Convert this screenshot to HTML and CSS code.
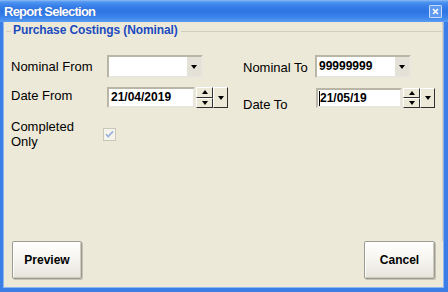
FILE: index.html
```html
<!DOCTYPE html>
<html>
<head>
<meta charset="utf-8">
<link rel="stylesheet" href="styles.css">
</head>
<body>
<div class="window">
  <div class="titlebar">
    <span class="title">Report Selection</span>
    <span class="close"><svg width="7" height="7" viewBox="0 0 7 7"><path d="M1 1 L6 6 M6 1 L1 6" stroke="#fff" stroke-width="1.6"/></svg></span>
  </div>
  <div class="frame">
    <div class="group">
      <div class="group-head">
        <span class="gline gline-left"></span>
        <span class="legend">Purchase Costings (Nominal)</span>
        <span class="gline gline-right"></span>
      </div>
      <div class="group-body">
        <div class="row row1">
          <div class="cell cell-left">
            <span class="label lbl-from">Nominal From</span>
            <div class="combo"><span class="combo-text"></span><span class="drop"><i class="tri-down"></i></span></div>
          </div>
          <div class="cell">
            <span class="label lbl-to nom-to">Nominal To</span>
            <div class="combo"><span class="combo-text">99999999</span><span class="drop"><i class="tri-down"></i></span></div>
          </div>
        </div>
        <div class="row row2">
          <div class="cell cell-left cell-top">
            <span class="label lbl-from date-from">Date From</span>
            <div class="datefield df-from"><span class="date-text">21/04/2019</span></div>
            <div class="spin spin-from"><span class="spin-btn"><i class="tri-up"></i></span><span class="spin-btn"><i class="tri-down"></i></span></div>
            <span class="dd dd-from"><i class="tri-down"></i></span>
          </div>
          <div class="cell cell-top">
            <span class="label lbl-to date-to">Date To</span>
            <div class="datefield df-to"><span class="caret"></span><span class="date-text">21/05/19</span></div>
            <div class="spin spin-to"><span class="spin-btn"><i class="tri-up"></i></span><span class="spin-btn"><i class="tri-down"></i></span></div>
            <span class="dd dd-to"><i class="tri-down"></i></span>
          </div>
        </div>
        <div class="row row3">
          <span class="label lbl-check">Completed<br>Only</span>
          <svg class="check" width="13" height="13" viewBox="0 0 13 13"><rect x="0.5" y="0.5" width="12" height="12" fill="#F4F3EC" stroke="#C9C7BA"/><path d="M3 6.2 L5.2 8.6 L10 3.4" fill="none" stroke="#9CAEDD" stroke-width="1.6"/></svg>
        </div>
      </div>
    </div>
    <div class="buttons">
      <button class="btn btn-preview">Preview</button>
      <button class="btn btn-cancel">Cancel</button>
    </div>
  </div>
</div>
</body>
</html>
```
FILE: styles.css
```css
* { box-sizing: border-box; }
html, body { margin: 0; padding: 0; }
body { width: 448px; height: 292px; overflow: hidden; font-family: "Liberation Sans", Arial, sans-serif; font-size: 13px; color: #000; }

.window { width: 448px; height: 292px; display: flex; flex-direction: column; }

.titlebar {
  height: 22px; flex: none; display: flex; align-items: flex-start; justify-content: space-between;
  padding: 4px 6px 0 4px;
  background: linear-gradient(to bottom, #8ebcf6 0px, #4f95f0 2px, #3880ea 6px, #2f74e2 11px, #3a83ec 17px, #4b92f0 20px, #5b9cf2 22px);
}
.title { color: #fff; font-weight: bold; font-size: 13px; line-height: 15px; letter-spacing: -0.75px; text-shadow: 0 0 1px rgba(20,60,150,0.6); }
.close {
  width: 13px; height: 13px; margin-top: 1px; border: 1px solid #c7dcfb; border-radius: 1px;
  background: #5f9af0; display: flex; align-items: center; justify-content: center;
}

.frame {
  flex: 1; display: flex; flex-direction: column; background: #ECE9D8;
  border-left: 3px solid #3b7ee6; border-right: 4px solid #3b7ee6; border-bottom: 4px solid #3b7ee6;
  box-shadow: inset 1px 0 #8fb6ef, inset -1px 0 #8fb6ef, inset 0 -1px #8fb6ef;
}

.group { flex: 1; display: flex; flex-direction: column; margin-right: 1px; border-right: 1px solid #D0CEC0; }
.group-head { display: flex; align-items: center; height: 13px; margin-top: 2px; }
.gline { height: 1px; background: #D0CEC0; }
.gline-left { width: 5px; margin-left: 3px; margin-right: 2px; margin-top: 1px; }
.gline-right { flex: 1; margin-left: 3px; margin-top: 1px; }
.legend { color: #1C4BC0; font-weight: bold; font-size: 12px; line-height: 13px; letter-spacing: -0.1px; }

.group-body { padding-left: 8px; }
.row { display: flex; }
.row1 { margin-top: 18px; height: 23px; }
.row2 { margin-top: 9px; height: 22px; }
.row3 { margin-top: 10px; align-items: center; }

.cell { display: flex; align-items: center; }
.cell-top { align-items: flex-start; }
.cell-left { width: 232px; flex: none; }

.label { line-height: 15px; display: block; }
.lbl-from { width: 96px; }
.lbl-to { width: 72px; }
.nom-to { margin-top: 2px; }
.date-from { margin-top: 1px; }
.date-to { margin-top: 10px; width: 73px; }
.lbl-check { width: 92px; }

.combo {
  width: 96px; height: 23px; display: flex; justify-content: space-between; background: #fff;
  border: 2px solid; border-color: #B9B6A8 #E9E7DD #E9E7DD #B9B6A8;
}
.combo-text { font-weight: bold; font-size: 12px; line-height: 19px; padding-left: 2px; }
.drop { width: 14px; height: 19px; background: #E4E2D8; display: flex; align-items: center; justify-content: center; }

.tri-down { display: block; width: 0; height: 0; border-left: 3.5px solid transparent; border-right: 3.5px solid transparent; border-top: 4px solid #000; }
.tri-up { display: block; width: 0; height: 0; border-left: 3.5px solid transparent; border-right: 3.5px solid transparent; border-bottom: 4px solid #000; }

.datefield {
  height: 21px; background: #fff; display: flex; align-items: center; padding-left: 2px;
  border: 2px solid; border-color: #B9B6A8 #E9E7DD #E9E7DD #B9B6A8;
}
.df-from { width: 88px; }
.df-to { width: 86px; height: 20px; margin-top: 1px; padding-left: 1px; }
.date-text { font-weight: bold; font-size: 12px; line-height: 15px; }
.caret { width: 1px; height: 15px; background: #000; }

.spin { width: 17px; height: 21px; margin-left: 1px; display: flex; flex-direction: column; }
.spin-to { margin-top: 1px; height: 20px; }
.spin-btn {
  flex: 1; display: flex; align-items: center; justify-content: center; background: #ECE9D8;
  border: 1px solid; border-color: #fff #303030 #303030 #fff;
}
.dd {
  width: 15px; height: 21px; display: flex; align-items: center; justify-content: center; background: #ECE9D8;
  border: 1px solid; border-color: #fff #303030 #303030 #fff;
}
.dd-to { height: 20px; margin-top: 1px; }

.check { display: block; }

.buttons { display: flex; justify-content: space-between; padding: 0 9px 9px 9px; }
.btn {
  height: 38px; font-family: "Liberation Sans", Arial, sans-serif; font-weight: bold; font-size: 12px; color: #000;
  border: 1px solid #9C9A91; border-radius: 2px; padding: 0;
  background: linear-gradient(to bottom, #ffffff 0%, #F5F4EF 50%, #E6E4DA 100%);
  box-shadow: inset 1px 1px 0 #fff, inset -1px -1px 0 #CDCABB, 1px 1px 0 #C4C2B6;
}
.btn-preview { width: 70px; }
.btn-cancel { width: 71px; }
```
